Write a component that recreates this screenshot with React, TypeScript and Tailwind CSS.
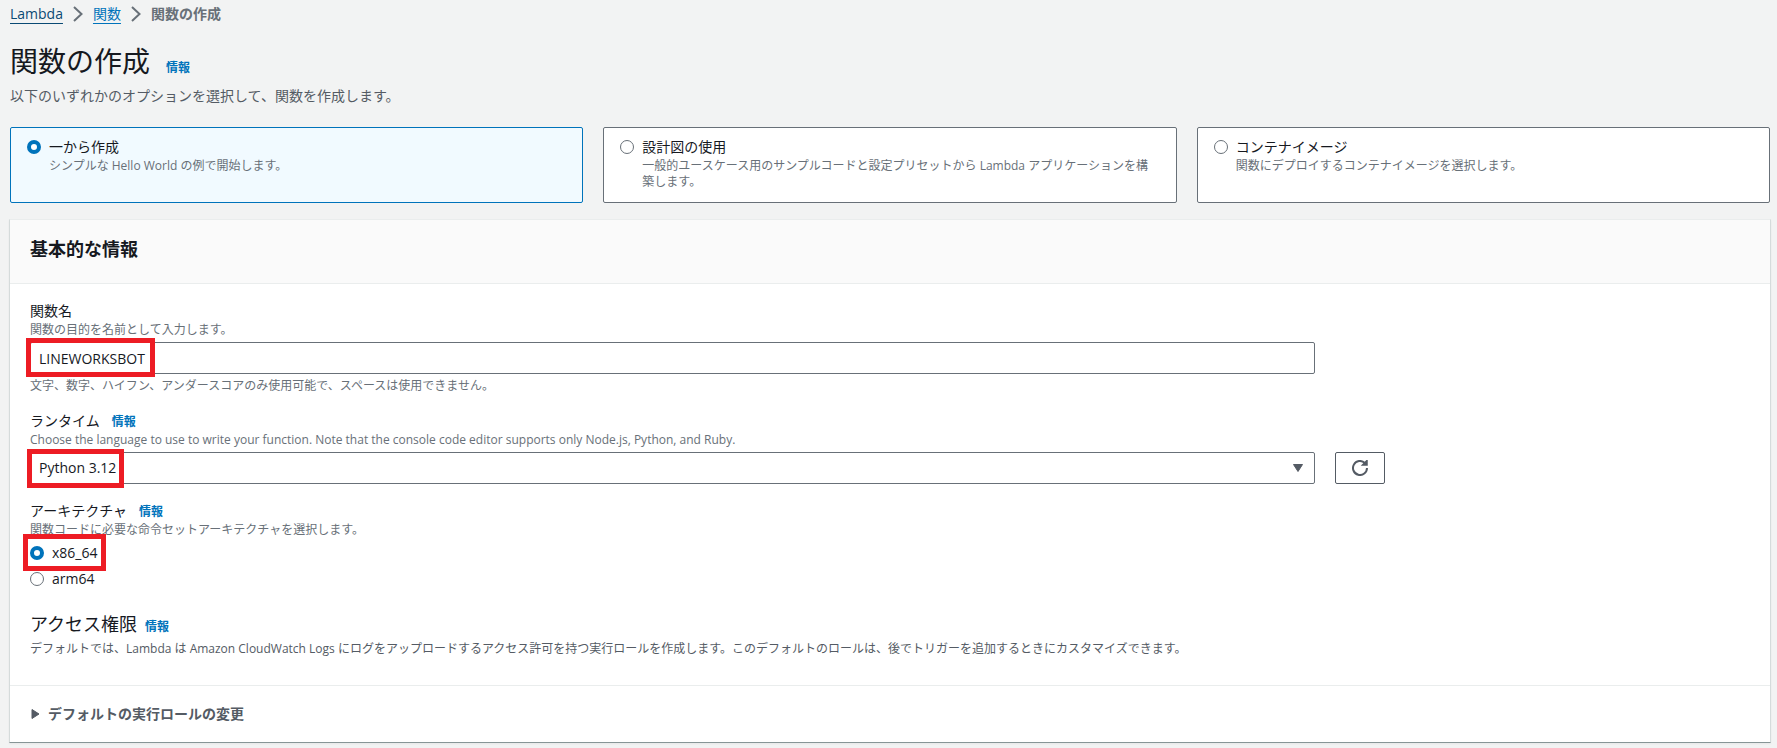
import type { ReactNode } from "react"

const options = [
  {
    id: "scratch",
    title: "一から作成",
    description: "シンプルな Hello World の例で開始します。",
  },
  {
    id: "blueprint",
    title: "設計図の使用",
    description: "一般的ユースケース用のサンプルコードと設定プリセットから Lambda アプリケーションを構築します。",
  },
  {
    id: "container",
    title: "コンテナイメージ",
    description: "関数にデプロイするコンテナイメージを選択します。",
  },
]

const radioClass =
  "appearance-none shrink-0 w-[14px] h-[14px] rounded-full border border-[#687078] bg-white checked:border-4 checked:border-[#0073bb]"

function InfoLink() {
  return (
    <a href="#info" className="text-xs leading-4 font-bold text-[#0073bb]">
      情報
    </a>
  )
}

function Chevron() {
  return (
    <svg viewBox="0 0 10 16" className="w-[10px] h-4" fill="none" stroke="#687078" strokeWidth="2">
      <path d="M1 1 L8.5 8 L1 15" />
    </svg>
  )
}

function Highlight({ className }: { className: string }) {
  return <span aria-hidden="true" className={`absolute border-5 border-[#ed1c24] pointer-events-none ${className}`} />
}

function Hint({ children }: { children: ReactNode }) {
  return <p className="text-xs leading-4 text-[#687078]">{children}</p>
}

export default function App() {
  return (
    <main className="min-h-screen bg-[#f2f3f3] pt-[3px] pl-[10px] pr-[7px] pb-1 text-sm leading-[22px] text-[#16191f] font-['Open_Sans','Noto_Sans_CJK_JP',sans-serif]">
      <nav aria-label="パンくずリスト">
        <ol className="flex items-center gap-[10px]">
          <li>
            <a href="#lambda" className="text-[#0a4a74] underline underline-offset-4">Lambda</a>
          </li>
          <li><Chevron /></li>
          <li>
            <a href="#functions" className="text-[#0073bb] underline underline-offset-4">関数</a>
          </li>
          <li><Chevron /></li>
          <li className="font-bold text-[#687078]">関数の作成</li>
        </ol>
      </nav>

      <header className="mt-[18px]">
        <div className="flex items-baseline gap-4">
          <h1 className="text-[28px] leading-9">関数の作成</h1>
          <InfoLink />
        </div>
        <p className="mt-[6px] text-[#545b64]">以下のいずれかのオプションを選択して、関数を作成します。</p>
      </header>

      <div role="radiogroup" aria-label="作成オプション" className="mt-5 grid grid-cols-3 gap-5">
        {options.map((option) => (
          <label
            key={option.id}
            className="flex gap-2 rounded-xs border border-[#687078] bg-white pt-2 pb-3 pl-4 pr-5 min-h-[76px] has-checked:border-[#0073bb] has-checked:bg-[#f1faff]"
          >
            <input
              type="radio"
              name="option"
              defaultChecked={option.id === "scratch"}
              className={`${radioClass} mt-1`}
            />
            <span className="block">
              <span className="block">{option.title}</span>
              <span className="block text-xs leading-4 text-[#687078]">{option.description}</span>
            </span>
          </label>
        ))}
      </div>

      <section className="mt-4 -mx-px bg-white border border-t-[#eaeded] border-x-[#d5dbdb] border-b-[#879596] shadow-xs">
        <div className="bg-[#fafafa] border-b border-[#eaeded] px-5 pt-[18px] pb-[23px]">
          <h2 className="text-lg leading-[22px] font-bold">基本的な情報</h2>
        </div>

        <div className="px-5 pt-4 pb-7">
          <div className="grid grid-cols-4 gap-x-5 gap-y-4">
            <div className="col-span-3">
              <label htmlFor="name" className="block">関数名</label>
              <Hint>関数の目的を名前として入力します。</Hint>
              <div className="relative my-1">
                <input
                  id="name"
                  type="text"
                  defaultValue="LINEWORKSBOT"
                  className="block w-full h-8 rounded-xs border border-[#687078] bg-white px-2"
                />
                <Highlight className="-left-1 -top-1 w-[129px] h-[39px]" />
              </div>
              <Hint>文字、数字、ハイフン、アンダースコアのみ使用可能で、スペースは使用できません。</Hint>
            </div>

            <div className="col-span-3 col-start-1">
              <div className="flex items-baseline gap-3">
                <label htmlFor="runtime">ランタイム</label>
                <InfoLink />
              </div>
              <Hint>
                Choose the language to use to write your function. Note that the console code editor supports only
                Node.js, Python, and Ruby.
              </Hint>
              <div className="relative mt-1">
                <select
                  id="runtime"
                  className="appearance-none block w-full h-8 rounded-xs border border-[#687078] bg-white px-2"
                >
                  <option>Python 3.12</option>
                </select>
                <svg viewBox="0 0 10 8" className="absolute right-3 top-3 w-[10px] h-2 pointer-events-none">
                  <path d="M0.5 0.5 H9.5 L5 7.5 Z" fill="#545b64" stroke="#545b64" strokeLinejoin="round" />
                </svg>
                <Highlight className="-left-[3px] -top-[3px] w-[97px] h-[39px]" />
              </div>
            </div>
            <div className="flex items-end">
              <button
                type="button"
                aria-label="更新"
                className="flex h-8 w-[50px] items-center justify-center rounded-xs border border-[#545b64] bg-white"
              >
                <svg viewBox="0 0 16 16" className="w-4 h-4" fill="none" stroke="#545b64" strokeWidth="2">
                  <path d="M15 8 a7 7 0 1 1 -2.2 -5.1 L14 4" />
                  <path d="M15 0.5 V5 H10.5 Z" fill="#545b64" strokeWidth="1.5" />
                </svg>
              </button>
            </div>

            <fieldset className="col-span-3 col-start-1">
              <legend className="flex items-baseline gap-3">
                アーキテクチャ
                <InfoLink />
              </legend>
              <Hint>関数コードに必要な命令セットアーキテクチャを選択します。</Hint>
              <div className="mt-1 flex flex-col items-start gap-1">
                <label className="relative flex items-center gap-2">
                  <input type="radio" name="arch" defaultChecked className={radioClass} />
                  x86_64
                  <Highlight className="-left-[7px] -top-2 w-[83px] h-[37px]" />
                </label>
                <label className="flex items-center gap-2">
                  <input type="radio" name="arch" className={radioClass} />
                  arm64
                </label>
              </div>
            </fieldset>
          </div>

          <div className="mt-[23px] flex items-baseline gap-2">
            <h3 className="text-lg leading-[22px]">アクセス権限</h3>
            <InfoLink />
          </div>
          <p className="mt-[6px] text-xs leading-4 text-[#545b64]">
            デフォルトでは、Lambda は Amazon CloudWatch Logs
            にログをアップロードするアクセス許可を持つ実行ロールを作成します。このデフォルトのロールは、後でトリガーを追加するときにカスタマイズできます。
          </p>
        </div>

        <div className="border-t border-[#eaeded] px-5 py-[17px]">
          <button type="button" aria-expanded="false" className="flex items-center gap-2 font-bold text-[#545b64]">
            <svg viewBox="0 0 10 12" className="w-[10px] h-3">
              <path d="M2 1.5 V10.5 L9 6 Z" fill="#545b64" stroke="#545b64" strokeLinejoin="round" />
            </svg>
            デフォルトの実行ロールの変更
          </button>
        </div>
      </section>
    </main>
  )
}
